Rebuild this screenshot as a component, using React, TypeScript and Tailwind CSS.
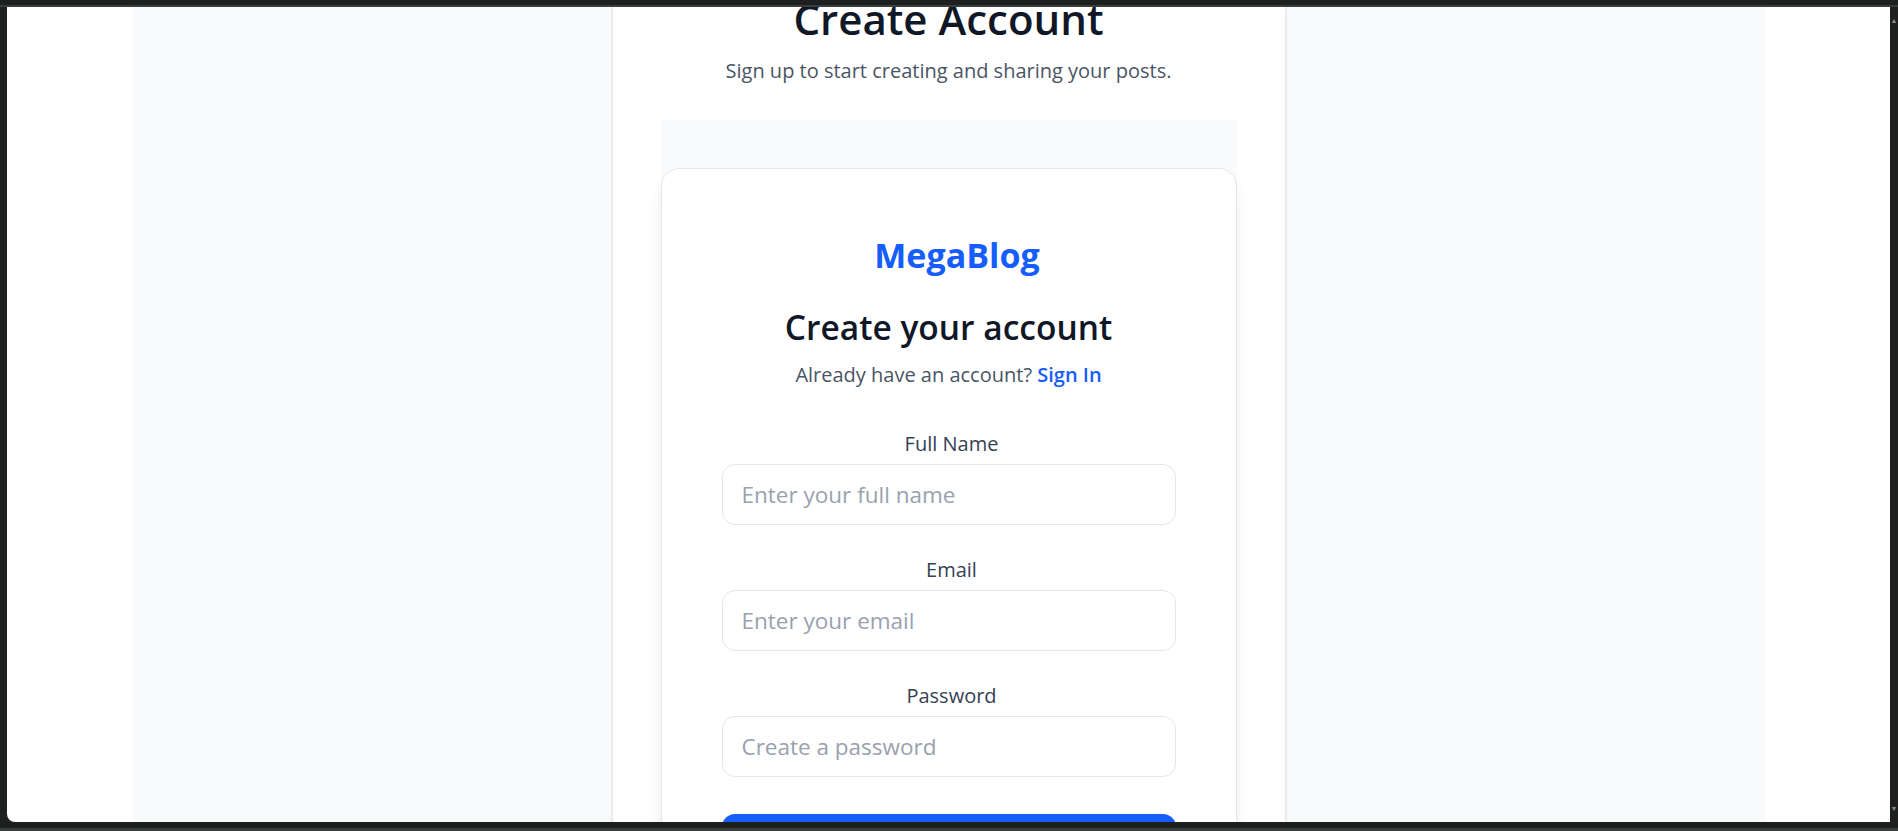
import React from 'react';

interface FieldProps {
    label: string;
    placeholder: string;
    type?: string;
}

const Field: React.FC<FieldProps> = ({ label, placeholder, type = 'text' }) => {
    return (
        <div className="flex flex-col">
            <label className="block pl-[6px] text-[20px] leading-[28px] text-gray-700 mb-[6px]">
                {label}
            </label>
            <input
                type={type}
                placeholder={placeholder}
                className="h-[61px] w-full rounded-[13px] border border-gray-200 bg-white px-[19px] text-[22.5px] text-gray-900 placeholder:text-gray-400 focus:outline-none"
            />
        </div>
    );
};

const SignupCard: React.FC = () => {
    return (
        <div className="rounded-[18px] border border-gray-200 bg-white px-[60px] pt-[66px] pb-12 shadow-lg text-center">
            <div className="pl-[17px] text-[34px] leading-[40px] font-bold text-blue-600">MegaBlog</div>
            <h2 className="mt-[32px] text-[33.5px] leading-[40px] font-semibold text-gray-900">
                Create your account
            </h2>
            <p className="mt-[14px] text-[20px] leading-[28px] text-gray-600">
                Already have an account?{' '}
                <a href="#" className="font-semibold text-blue-600">
                    Sign In
                </a>
            </p>
            <form className="mt-[41px] flex flex-col gap-[31px]" onSubmit={(e) => e.preventDefault()}>
                <Field label="Full Name" placeholder="Enter your full name" />
                <Field label="Email" placeholder="Enter your email" type="email" />
                <Field label="Password" placeholder="Create a password" type="password" />
                <button
                    type="submit"
                    className="mt-[6px] h-[61px] w-full rounded-[13px] bg-blue-600 text-[20px] font-semibold text-white"
                >
                    Create Account
                </button>
            </form>
        </div>
    );
};

export default function App() {
    return (
        <div className="h-[831px] w-full overflow-hidden bg-[#1e201f] flex flex-col font-['Open_Sans',sans-serif]">
            <div className="h-[5px] shrink-0" />
            <div className="h-[2px] shrink-0 bg-[#3b3c3c]" />
            <div className="flex flex-1 min-h-0">
                <div className="w-[7px] shrink-0" />
                <main className="flex-1 min-w-0 bg-white rounded-bl-[8px] overflow-hidden flex justify-center">
                    <div className="w-[1633px] shrink-0 bg-gray-50 flex justify-center">
                        <section className="w-[674px] shrink-0 bg-white border-x border-gray-200 shadow-sm px-12 text-center">
                            <h1 className="-mt-[10px] text-[42px] leading-[44px] font-semibold text-gray-900">
                                Create Account
                            </h1>
                            <p className="mt-4 text-[20px] leading-[28px] text-gray-600">
                                Sign up to start creating and sharing your posts.
                            </p>
                            <div className="mt-[35px] bg-gray-50 pt-12">
                                <SignupCard />
                            </div>
                        </section>
                    </div>
                </main>
                <div className="w-[8px] shrink-0 flex flex-col items-center justify-between py-[10px] text-[7px] leading-none text-[#8a8a8a]">
                    <span>▲</span>
                    <span>▼</span>
                </div>
            </div>
            <div className="h-[6px] shrink-0" />
            <div className="h-[3px] shrink-0 bg-[#3b3c3c]" />
        </div>
    );
}
